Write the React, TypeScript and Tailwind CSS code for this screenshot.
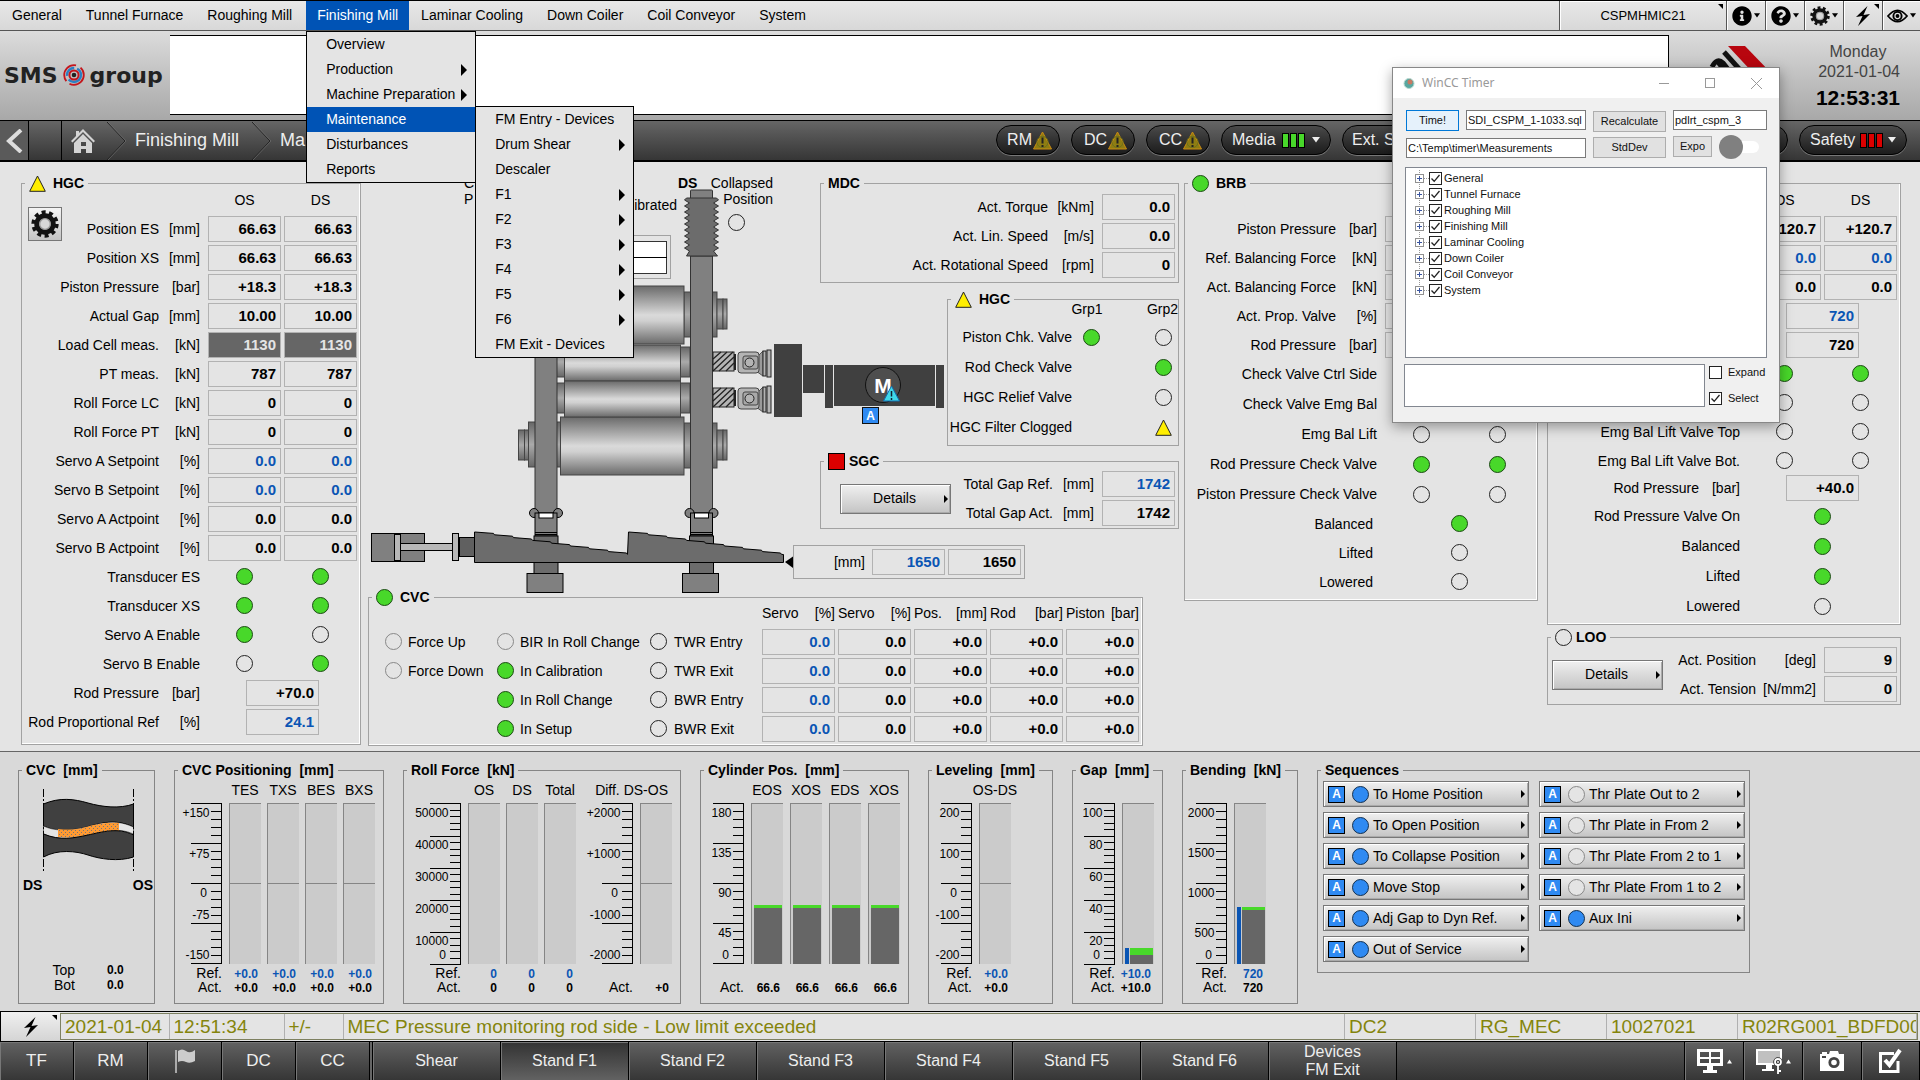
import React, { ReactNode } from "react";
import { FaInfoCircle, FaQuestionCircle } from "react-icons/fa";

/* ---------- small shared parts ---------- */

type LampState = "on" | "off" | "dim" | "blue";

const lampTone: Record<LampState, string> = {
  on: "border-[#1c4a14] bg-[#48d82a]",
  off: "border-[#222] bg-transparent",
  dim: "border-[#888] bg-[#e4e4e4]",
  blue: "border-[#14304e] bg-[#2f8af2]",
};

function Lamp({ s }: { s: LampState }) {
  return <span className={`inline-block h-[17px] w-[17px] shrink-0 rounded-full border align-middle ${lampTone[s]}`} />;
}

function WarnTriangle() {
  return (
    <svg className="inline-block h-[17px] w-[17px] shrink-0 align-middle" viewBox="0 0 17 17">
      <path d="M8.5 1 L16.3 16.3 H0.7 Z" fill="#ffee00" stroke="#222" />
    </svg>
  );
}

function Arrow({ className }: { className?: string }) {
  return (
    <svg className={className} viewBox="0 0 5 10" preserveAspectRatio="none">
      <path d="M0 0 L5 5 L0 10 Z" fill="currentColor" />
    </svg>
  );
}

function Down({ className }: { className?: string }) {
  return (
    <svg className={className} viewBox="0 0 8 6">
      <path d="M0 0 H8 L4 5.5 Z" fill="currentColor" />
    </svg>
  );
}

function ABadge() {
  return (
    <span className="flex h-[17px] w-[17px] shrink-0 items-center justify-center border border-black bg-[#2f8af2] text-[12px] leading-none font-bold text-white">
      A
    </span>
  );
}

function Panel({
  title,
  icon,
  bevel,
  tight,
  low,
  className = "",
  children,
}: {
  title: string;
  icon?: ReactNode;
  bevel?: boolean;
  tight?: boolean;
  low?: boolean;
  className?: string;
  children: ReactNode;
}) {
  return (
    <fieldset
      className={`relative min-w-0 border ${low ? "border-[#858585]" : "border-[#a2a2a2]"} ${bevel ? "shadow-[inset_-1px_-1px_0_#fff]" : ""} ${className}`}
    >
      <legend
        className={`ml-[3px] flex h-5 items-center px-1 text-[14px] leading-5 font-bold whitespace-pre ${low ? "bg-[#d9d9d9]" : "bg-[#e4e4e4]"} ${tight ? "gap-1" : "gap-[7px]"}`}
      >
        {icon}
        {title}
      </legend>
      {children}
    </fieldset>
  );
}

type Cell = { v?: string; tone?: "blue" | "dark"; lamp?: LampState; warn?: boolean };
type Row = { l: string; u?: string; c: Cell[]; h?: "tall" | "short"; inset?: boolean };

const boxTone = {
  plain: "border-[#b2b2b2] font-bold text-black",
  blue: "border-[#b2b2b2] font-bold text-[#0a55b4]",
  dark: "border-[#b2b2b2] bg-[#666] font-bold text-[#e4e4e4]",
};

function Box({ v, tone }: { v: string; tone?: Cell["tone"] }) {
  return (
    <span
      className={`inline-flex h-[26px] w-[73px] items-center justify-end border pr-1 align-middle text-[15px] ${boxTone[tone ?? "plain"]}`}
    >
      {v}
    </span>
  );
}

function CellView({ c }: { c: Cell }) {
  if (c.warn) return <WarnTriangle />;
  if (c.lamp) return <Lamp s={c.lamp} />;
  return <Box v={c.v ?? ""} tone={c.tone} />;
}

const rowHeight = { normal: "h-[29px]", tall: "h-[30px]", short: "h-[26px]" };
const unitWidth = { narrow: "w-[49px]", mid: "w-[54px]", wide: "w-[68px]" };

function MeasureTable({
  rows,
  heads,
  cols = 2,
  unit = "narrow",
  className = "",
}: {
  rows: Row[];
  heads?: string[];
  cols?: 1 | 2;
  unit?: keyof typeof unitWidth;
  className?: string;
}) {
  return (
    <table className={`-mt-px w-full table-fixed border-collapse text-[14px] leading-4 whitespace-nowrap ${className}`}>
      <colgroup>
        <col />
        <col className={unitWidth[unit]} />
        <col className="w-[76px]" />
        {cols === 2 && <col className="w-[76px]" />}
      </colgroup>
      {heads && (
        <thead>
          <tr className="h-[22px]">
            <td colSpan={2} />
            {heads.map((h, i) => (
              <th key={i} scope="col" className="p-0 pr-[3px] align-top font-normal">
                {h}
              </th>
            ))}
          </tr>
        </thead>
      )}
      <tbody>
        {rows.map((r, i) => (
          <tr key={i} className={rowHeight[r.h ?? "normal"]}>
            <th
              scope="row"
              colSpan={r.u ? 1 : 2}
              className={`p-0 text-right font-normal ${r.u ? "" : r.inset ? "pr-3" : "pr-2"}`}
            >
              {r.l}
            </th>
            {r.u && <td className="p-0 pr-2 text-right">{r.u}</td>}
            {r.c.map((c, j) => (
              <td key={j} colSpan={cols / r.c.length} className="p-0 pr-[3px] text-center">
                <CellView c={c} />
              </td>
            ))}
          </tr>
        ))}
      </tbody>
    </table>
  );
}

function BevelButton({ children, className = "" }: { children: ReactNode; className?: string }) {
  return (
    <button
      className={`flex items-center border border-[#777] bg-linear-to-b from-[#f0f0f0] to-[#c4c4c4] text-[14px] whitespace-nowrap shadow-[inset_1px_1px_0_#fff,inset_-1px_-1px_0_#aaa] ${className}`}
    >
      {children}
    </button>
  );
}

function DetailsButton({ className = "" }: { className?: string }) {
  return (
    <BevelButton className={`h-[30px] w-[111px] shrink-0 pr-[2px] pl-1 ${className}`}>
      <span className="flex-1 text-center">Details</span>
      <Arrow className="h-2 w-1" />
    </BevelButton>
  );
}

/* ---------- icons ---------- */

function Gear({ className }: { className?: string }) {
  return (
    <svg className={className} viewBox="0 0 24 24">
      <circle cx="12" cy="12" r="10" fill="none" stroke="#111" strokeWidth="3.4" strokeDasharray="3.4 2.88" />
      <circle cx="12" cy="12" r="7" fill="#d8d8d8" stroke="#111" strokeWidth="4.4" />
      <circle cx="12" cy="12" r="4.6" fill="none" stroke="#999" strokeWidth="1.2" />
    </svg>
  );
}

function Bolt({ className }: { className?: string }) {
  return (
    <svg className={className} viewBox="0 0 16 20">
      <path d="M12.5 0 L1 11 L7.5 10 L3 20 L15 8 L8.5 9 Z" fill="#000" />
    </svg>
  );
}

function Eye({ className }: { className?: string }) {
  return (
    <svg className={className} viewBox="0 0 22 16">
      <path d="M1 8 Q11 -4 21 8 Q11 20 1 8 Z" fill="none" stroke="#000" strokeWidth="1.8" />
      <circle cx="11" cy="8" r="4.3" fill="none" stroke="#000" strokeWidth="2" />
      <circle cx="11" cy="8" r="2" />
    </svg>
  );
}

function CornerMark() {
  return (
    <svg className="absolute top-[3px] right-[3px] h-[5px] w-[5px]" viewBox="0 0 5 5">
      <path d="M0 0 H5 V5 Z" />
    </svg>
  );
}

/* ---------- top menu ---------- */

const menus = [
  "General",
  "Tunnel Furnace",
  "Roughing Mill",
  "Finishing Mill",
  "Laminar Cooling",
  "Down Coiler",
  "Coil Conveyor",
  "System",
];

const millMenu: [string, boolean][] = [
  ["Overview", false],
  ["Production", true],
  ["Machine Preparation", true],
  ["Maintenance", false],
  ["Disturbances", false],
  ["Reports", false],
];

const maintMenu: [string, boolean][] = [
  ["FM Entry - Devices", false],
  ["Drum Shear", true],
  ["Descaler", false],
  ["F1", true],
  ["F2", true],
  ["F3", true],
  ["F4", true],
  ["F5", true],
  ["F6", true],
  ["FM Exit - Devices", false],
];

function MenuList({ items, active, className }: { items: [string, boolean][]; active?: string; className: string }) {
  return (
    <div role="menu" className={`absolute z-20 border border-black bg-[#e4e4e4] text-[14px] text-black ${className}`}>
      {items.map(([t, sub]) => (
        <button
          key={t}
          role="menuitem"
          className={`flex h-[25px] w-full items-center justify-between pr-2 pl-[19px] text-left whitespace-nowrap ${t === active ? "bg-[#0053b5] text-white" : ""}`}
        >
          {t}
          {sub && <Arrow className="h-3 w-[6px] shrink-0" />}
        </button>
      ))}
    </div>
  );
}

function TopMenu() {
  const cell =
    "relative flex h-full items-center justify-center gap-[2px] border-l border-[#555] shadow-[inset_1px_1px_0_#fff]";
  return (
    <nav className="flex h-[31px] border-t border-b border-t-black border-b-[#555] bg-linear-to-b from-[#e8e8e8] to-[#d8d8d8] text-[14px]">
      {menus.map((m) =>
        m === "Finishing Mill" ? (
          <div key={m} className="relative ml-[2px]">
            <button className="h-[29px] bg-[#0053b5] px-[11px] text-white">{m}</button>
            <MenuList items={millMenu} active="Maintenance" className="top-[30px] left-0 w-[170px]" />
            <MenuList items={maintMenu} className="top-[105px] left-[169px] w-[159px]" />
          </div>
        ) : (
          <button key={m} className="px-3">
            {m}
          </button>
        ),
      )}
      <div className="ml-auto flex">
        <button className={`${cell} w-[167px] text-[13px]`}>
          CSPMHMIC21
          <CornerMark />
        </button>
        <button aria-label="Information" className={`${cell} w-[39px]`}>
          <FaInfoCircle size={20} />
          <Down className="h-[5px] w-[6px]" />
        </button>
        <button aria-label="Help" className={`${cell} w-[39px]`}>
          <FaQuestionCircle size={20} />
          <Down className="h-[5px] w-[6px]" />
        </button>
        <button aria-label="Settings" className={`${cell} w-[39px]`}>
          <Gear className="h-5 w-5" />
          <Down className="h-[5px] w-[6px]" />
        </button>
        <button aria-label="Alarms" className={`${cell} w-[39px]`}>
          <Bolt className="h-5 w-4" />
          <CornerMark />
        </button>
        <button aria-label="View" className={`${cell} w-[38px]`}>
          <Eye className="h-4 w-[21px]" />
          <Down className="h-[5px] w-[6px]" />
        </button>
      </div>
    </nav>
  );
}

function Header() {
  return (
    <header className="flex h-[89px] bg-linear-to-b from-[#dcdcdc] to-[#a8a8a8] pt-1 pb-[5px]">
      <div className="flex w-[170px] shrink-0 items-center pl-1 font-['DejaVu_Sans'] text-[22px] font-bold text-[#222]">
        <span>SMS</span>
        <svg className="mx-[5px] h-6 w-[22px] shrink-0" viewBox="0 0 22 22" fill="none">
          <circle cx="11" cy="11" r="9.8" stroke="#c4161c" strokeWidth="1.8" strokeDasharray="20 4 24 5" />
          <circle cx="11" cy="11" r="7" stroke="#2b7fc3" strokeWidth="2.4" strokeDasharray="17 4 12 3" />
          <circle cx="11" cy="11" r="4.6" stroke="#c4161c" strokeWidth="2" />
          <circle cx="11" cy="11" r="2.3" fill="#222" />
        </svg>
        <span>group</span>
      </div>
      <div className="flex-1 border border-l-0 border-black bg-white" />
      <div className="flex w-[251px] shrink-0 justify-between pr-5">
        <svg className="mt-2 ml-10 h-12 w-16" viewBox="0 0 64 48">
          <path d="M19 3 H36 L64 32 H46 Z" fill="#b8060f" />
          <g stroke="#111" strokeWidth="5" fill="none">
            <path d="M15 9 L32 28" />
            <path d="M3 24 Q8 14 14 20 L25 34 M9 19 L22 36" />
          </g>
        </svg>
        <div className="flex flex-col items-end pt-[7px] text-[16px] leading-5 text-[#444]">
          <span className="self-center">Monday</span>
          <span>2021-01-04</span>
          <time className="mt-1 text-[21px] leading-6 font-bold text-black">12:53:31</time>
        </div>
      </div>
    </header>
  );
}

function Pill({ children, className = "" }: { children?: ReactNode; className?: string }) {
  return (
    <button
      className={`flex h-[30px] shrink-0 items-center rounded-full border border-black bg-linear-to-b from-[#4a4a4a] to-[#1c1c1c] text-[16px] whitespace-nowrap text-[#eee] shadow-[0_1px_0_#777] ${className}`}
    >
      {children}
    </button>
  );
}

function PillWarn() {
  return (
    <svg className="h-[19px] w-[19px]" viewBox="0 0 19 19">
      <path d="M9.5 1 L18.5 18 H0.5 Z" fill="#8e7d12" stroke="#c98a12" />
      <circle cx="9.5" cy="11" r="5.6" fill="none" stroke="#6c6f1c" />
      <path d="M9.5 6.5 V12.5 M9.5 14 V16" stroke="#222" strokeWidth="2" />
    </svg>
  );
}

function Bars({ red }: { red?: boolean }) {
  const tone = red ? "bg-[#dc0000]" : "bg-[#48d82a]";
  return (
    <span className="flex gap-px">
      {[0, 1, 2].map((i) => (
        <span key={i} className={`h-[15px] w-[7px] border border-black ${tone}`} />
      ))}
    </span>
  );
}

function Chevron() {
  return (
    <svg className="h-[38px] w-[19px]" viewBox="0 0 19 38" fill="none">
      <path d="M0 0 L18 19 L0 38" stroke="#222" />
      <path d="M1 0 L19 19 L1 38" stroke="#777" strokeWidth="0.6" />
    </svg>
  );
}

function CrumbBar() {
  return (
    <div className="flex h-[42px] items-center justify-between border-t border-b-2 border-black bg-linear-to-b from-[#666] to-[#363636]">
      <div className="flex h-full items-center text-[18px] text-[#eee]">
        <button aria-label="Back" className="flex h-full w-[29px] items-center justify-center border-r border-black bg-[#5a5a5a]">
          <svg className="h-6 w-5" viewBox="0 0 20 24" fill="none">
            <path d="M17 1 L5 12 L17 23" stroke="#ddd" strokeWidth="4" />
          </svg>
        </button>
        <div className="h-full w-[33px] border-r border-black" />
        <button aria-label="Home" className="flex w-[45px] items-center pl-[9px]">
          <svg className="h-6 w-6" viewBox="0 0 24 24" fill="#d4d4d4">
            <path d="M12 0 L24 12 L22.5 13.5 L12 3 L1.5 13.5 L0 12 L5 7 V2 H8 V4 Z" />
            <path d="M12 5 L21 14 V24 H15 V20 H10 V24 H3 V14 Z M10 13 V17 H15 V13 Z" fillRule="evenodd" />
          </svg>
        </button>
        <Chevron />
        <button className="px-[9px]">Finishing Mill</button>
        <span className="ml-1">
          <Chevron />
        </span>
        <button className="px-[9px]">Ma</button>
      </div>
      <div className="flex items-center gap-[11px] pr-[13px] pb-px">
        {["RM", "DC", "CC"].map((t) => (
          <Pill key={t} className="w-[64px] justify-end gap-px pr-[7px]">
            {t}
            <PillWarn />
          </Pill>
        ))}
        <Pill className="w-[110px] justify-between px-[10px]">
          Media <Bars /> <Down className="h-[6px] w-2" />
        </Pill>
        <Pill className="w-[110px] px-[9px]">Ext. S</Pill>
        <span className="w-[204px]" />
        <Pill className="w-[110px]" />
        <Pill className="w-[108px] justify-between px-[10px]">
          Safety <Bars red /> <Down className="h-[6px] w-2" />
        </Pill>
      </div>
    </div>
  );
}

/* ---------- main process area ---------- */

const two = (v: string, tone?: Cell["tone"]): Cell[] => [
  { v, tone },
  { v, tone },
];
const lamps = (...s: LampState[]): Cell[] => s.map((lamp) => ({ lamp }));

const hgcRows: Row[] = [
  { l: "Position ES", u: "[mm]", c: two("66.63") },
  { l: "Position XS", u: "[mm]", c: two("66.63") },
  { l: "Piston Pressure", u: "[bar]", c: two("+18.3") },
  { l: "Actual Gap", u: "[mm]", c: two("10.00") },
  { l: "Load Cell meas.", u: "[kN]", c: two("1130", "dark") },
  { l: "PT meas.", u: "[kN]", c: two("787") },
  { l: "Roll Force LC", u: "[kN]", c: two("0") },
  { l: "Roll Force PT", u: "[kN]", c: two("0") },
  { l: "Servo A Setpoint", u: "[%]", c: two("0.0", "blue") },
  { l: "Servo B Setpoint", u: "[%]", c: two("0.0", "blue") },
  { l: "Servo A Actpoint", u: "[%]", c: two("0.0") },
  { l: "Servo B Actpoint", u: "[%]", c: two("0.0") },
  { l: "Transducer ES", c: lamps("on", "on") },
  { l: "Transducer XS", c: lamps("on", "on") },
  { l: "Servo A Enable", c: lamps("on", "off") },
  { l: "Servo B Enable", c: lamps("off", "on") },
  { l: "Rod Pressure", u: "[bar]", c: [{ v: "+70.0" }] },
  { l: "Rod Proportional Ref", u: "[%]", c: [{ v: "24.1", tone: "blue" }] },
];

const brbRows: Row[] = [
  { l: "Piston Pressure", u: "[bar]", c: two("") },
  { l: "Ref. Balancing Force", u: "[kN]", c: two("") },
  { l: "Act. Balancing Force", u: "[kN]", c: two("") },
  { l: "Act. Prop. Valve", u: "[%]", c: two("") },
  { l: "Rod Pressure", u: "[bar]", c: two("") },
  { l: "Check Valve Ctrl Side", c: lamps("off", "off"), h: "tall" },
  { l: "Check Valve Emg Bal", c: lamps("off", "off"), h: "tall" },
  { l: "Emg Bal Lift", c: lamps("off", "off"), h: "tall" },
  { l: "Rod Pressure Check Valve", c: lamps("on", "on"), h: "tall" },
  { l: "Piston Pressure Check Valve", c: lamps("off", "off"), h: "tall" },
  { l: "Balanced", c: lamps("on"), inset: true },
  { l: "Lifted", c: lamps("off"), inset: true },
  { l: "Lowered", c: lamps("off"), inset: true },
];

const liftRows: Row[] = [
  { l: "", c: two("+120.7") },
  { l: "", c: two("0.0", "blue") },
  { l: "", c: two("0.0") },
  { l: "", c: [{ v: "720", tone: "blue" }] },
  { l: "", c: [{ v: "720" }] },
  { l: "", c: lamps("on", "on") },
  { l: "", c: lamps("off", "off") },
  { l: "Emg Bal Lift Valve Top", c: lamps("off", "off") },
  { l: "Emg Bal Lift Valve Bot.", c: lamps("off", "off") },
  { l: "Rod Pressure", u: "[bar]", c: [{ v: "+40.0" }], h: "short" },
  { l: "Rod Pressure Valve On", c: lamps("on"), h: "tall" },
  { l: "Balanced", c: lamps("on"), h: "tall" },
  { l: "Lifted", c: lamps("on"), h: "tall" },
  { l: "Lowered", c: lamps("off"), h: "tall" },
];

const wedge = (x0: number) => {
  let d = `L${x0} 532`;
  for (let i = 1; i <= 8; i++) {
    const x = x0 + i * 19;
    const y = 532 + i * 2.8;
    d += ` L${x} ${y - 1.4} L${x + 1} ${y}`;
  }
  return d;
};

function Post({ x }: { x: number }) {
  const teeth = Array.from({ length: 9 }, (_, i) => 200 + i * 6);
  const left = teeth.map((y) => `L${x - 6} ${y} L${x - 1} ${y + 3}`).join(" ");
  const right = [...teeth].reverse().map((y) => `L${x + 23} ${y + 3} L${x + 28} ${y}`).join(" ");
  return (
    <g stroke="#333">
      <rect x={x} y="190" width="22" height="9" rx="1" fill="#808080" />
      <rect x={x} y="256" width="22" height="257" fill="#808080" />
      <path d={`M${x - 4} 198 ${left} L${x - 4} 256 H${x + 27} ${right} L${x + 26} 198 Z`} fill="#6c6c6c" />
      <g stroke="#000">
        <circle cx={x - 1} cy="513" r="4.5" fill="#808080" />
        <circle cx={x + 23} cy="513" r="4.5" fill="#808080" />
        <rect x={x} y="513" width="22" height="23" fill="#808080" />
        <rect x={x + 4} y="513" width="14" height="5" fill="#fff" />
        <path d={`M${x} 532.5 h22 M${x} 534.5 h22`} />
        <rect x={x - 1} y="536" width="24" height="38" fill="#6c6c6c" />
        <rect x={x - 8} y="573.500" width="36" height="19" fill="#808080" />
      </g>
    </g>
  );
}

function Spindle({ y }: { y: number }) {
  return (
    <g stroke="#222">
      <rect x="713" y={y + 1} width="21" height="19" fill="#b4b4b4" />
      <path
        d={`M713 ${y + 8} l8 -7 M713 ${y + 14} l14 -13 M713 ${y + 20} l20 -19 M719 ${y + 20} l15 -14 M726 ${y + 20} l8 -8`}
        strokeWidth="1.3"
      />
      <path d={`M735 ${y + 3} v16`} strokeWidth="2" />
      <path d={`M759 ${y + 4} L763 ${y} V${y + 25} L756 ${y + 20} H740 Z`} fill="#9a9a9a" stroke="#555" />
      <rect x="738" y={y + 1} width="21" height="21" rx="3" fill="#b4b4b4" stroke="#444" />
      <rect x="743" y={y + 5} width="15" height="13" rx="2" fill="#a8a8a8" stroke="#444" />
      <circle cx="749.5" cy={y + 11.5} r="4.5" fill="#b4b4b4" />
      <rect x="763" y={y} width="3" height="25" fill="#b4b4b4" />
      <rect x="767" y={y - 1} width="4" height="27" fill="#b4b4b4" />
    </g>
  );
}

function Mimic() {
  return (
    <svg
      className="absolute top-0 left-0 h-[421px] w-[577px] font-['Liberation_Sans'] text-[14px]"
      viewBox="369 173 577 421"
      fill="none"
    >
      <defs>
        <linearGradient id="roll" x1="0" x2="0" y1="0" y2="1">
          <stop offset="0" stopColor="#6a6a6a" />
          <stop offset="0.5" stopColor="#dadada" />
          <stop offset="0.6" stopColor="#d0d0d0" />
          <stop offset="1" stopColor="#6a6a6a" />
        </linearGradient>
        <linearGradient id="neck" x1="0" x2="0" y1="0" y2="1">
          <stop offset="0" stopColor="#666" />
          <stop offset="0.5" stopColor="#aaa" />
          <stop offset="1" stopColor="#666" />
        </linearGradient>
      </defs>
      <g fill="#000">
        <text x="464" y="188">C</text>
        <text x="464" y="204">P</text>
        <text x="677" y="210" textAnchor="end">ibrated</text>
        <text x="678" y="188" fontWeight="bold">DS</text>
        <text x="773" y="188" textAnchor="end">Collapsed</text>
        <text x="773" y="204" textAnchor="end">Position</text>
      </g>
      <circle cx="736.5" cy="222.5" r="8" stroke="#222" />
      <rect x="560.5" y="235.500" width="110" height="43" stroke="#a2a2a2" />
      <rect x="566.5" y="241.500" width="100" height="32" fill="#fff" stroke="#333" />
      <path d="M566 257.500 H667" stroke="#000" />

      <g stroke="#444">
        {[286, 417].map((y) => (
          <g key={y}>
            <rect x="518.500" y={y + 13} width="6" height="30" fill="url(#neck)" />
            <rect x="524.500" y={y + 13} width="4" height="30" fill="url(#neck)" />
            <rect x="528.500" y={y + 5} width="32" height="45" fill="url(#neck)" />
            <rect x="684" y={y + 6} width="33" height="45" fill="url(#neck)" />
            <rect x="717" y={y + 13} width="6" height="30" fill="url(#neck)" />
            <rect x="723" y={y + 13} width="4" height="30" fill="url(#neck)" />
            <rect x="560.500" y={y} width="123.500" height="58" fill="url(#roll)" />
          </g>
        ))}
        {[345, 381].map((y) => (
          <g key={y}>
            <rect x="556" y={y + 2} width="134" height="30" fill="url(#neck)" />
            <rect x="564.500" y={y} width="116" height="36" fill="url(#roll)" />
          </g>
        ))}
      </g>

      <Post x={535} />
      <Post x={690.5} />
      <Spindle y={351} />
      <Spindle y={387} />

      <g fill="#404040">
        <rect x="774" y="344" width="28" height="73" />
        <rect x="803" y="365" width="21" height="28" />
        <rect x="825" y="365" width="8" height="43" />
        <rect x="834" y="365" width="101" height="41" />
        <rect x="936" y="365" width="8" height="43" />
      </g>
      <circle cx="883" cy="385" r="17.500" fill="#4e4e4e" stroke="#111" />
      <text x="883" y="393" textAnchor="middle" fill="#fff" fontSize="21" fontWeight="bold">
        M
      </text>
      <path d="M891.500 386 L899.500 401 H883.500 Z" fill="#3fd8e8" stroke="#126cae" />
      <path d="M891.500 391 V396.500 M891.500 398 V400" stroke="#123" strokeWidth="1.500" />
      <rect x="862.500" y="407.500" width="16" height="16" fill="#2f8af2" stroke="#111" />
      <text x="870.500" y="420" textAnchor="middle" fill="#fff" fontSize="12" fontWeight="bold">
        A
      </text>

      <g stroke="#000">
        <rect x="371.500" y="533.500" width="53" height="28" fill="#808080" />
        <rect x="400.500" y="543.500" width="52" height="7" fill="#b8b8b8" />
        <rect x="394.500" y="534.500" width="6" height="26" fill="#b8b8b8" />
        <rect x="459.500" y="537.500" width="15" height="19" fill="#606060" />
        <rect x="452.500" y="533.500" width="6" height="27" fill="#b8b8b8" />
        <path d={`M474.500 562.500 ${wedge(474.5)} ${wedge(628.5)} L783.500 554.500 V562.500 Z`} fill="#6c6c6c" />
      </g>
      <path d="M785 562 L793 556.500 V568 Z" fill="#000" />
    </svg>
  );
}

const cvcTableRows = ["TWR Entry", "TWR Exit", "BWR Entry", "BWR Exit"];
const cvcHeads: [string, string][] = [
  ["Servo", "[%]"],
  ["Servo", "[%]"],
  ["Pos.", "[mm]"],
  ["Rod", "[bar]"],
  ["Piston", "[bar]"],
];

function LampList({ items, className = "" }: { items: [string, LampState][]; className?: string }) {
  return (
    <ul className={`flex flex-col pt-[22px] ${className}`}>
      {items.map(([t, s]) => (
        <li key={t} className="flex h-[29px] items-center gap-[6px] whitespace-nowrap">
          <Lamp s={s} />
          {t}
        </li>
      ))}
    </ul>
  );
}

function CvcPanel() {
  return (
    <Panel title="CVC" icon={<Lamp s="on" />} bevel className="mt-2 -ml-px w-[775px] pb-[2px]">
      <div className="-mt-[2px] flex text-[14px] leading-4">
        <LampList
          className="w-[112px] pl-4"
          items={[
            ["Force Up", "dim"],
            ["Force Down", "dim"],
          ]}
        />
        <LampList
          className="w-[154px] pl-4"
          items={[
            ["BIR In Roll Change", "dim"],
            ["In Calibration", "on"],
            ["In Roll Change", "on"],
            ["In Setup", "on"],
          ]}
        />
        <table className="ml-auto table-fixed border-collapse whitespace-nowrap">
          <thead>
            <tr className="h-[22px]">
              <td className="w-[112px]" />
              {cvcHeads.map(([a, b], i) => (
                <th key={i} scope="col" className="w-[76px] p-0 pr-[3px] align-top font-normal">
                  <span className="flex justify-between">
                    <span>{a}</span>
                    <span>{b}</span>
                  </span>
                </th>
              ))}
            </tr>
          </thead>
          <tbody>
            {cvcTableRows.map((r) => (
              <tr key={r} className="h-[29px]">
                <th scope="row" className="p-0 text-left font-normal">
                  <span className="flex items-center gap-[7px]">
                    <Lamp s="off" />
                    {r}
                  </span>
                </th>
                <td className="p-0"><Box v="0.0" tone="blue" /></td>
                <td className="p-0"><Box v="0.0" /></td>
                <td className="p-0"><Box v="+0.0" /></td>
                <td className="p-0"><Box v="+0.0" /></td>
                <td className="p-0"><Box v="+0.0" /></td>
              </tr>
            ))}
          </tbody>
        </table>
      </div>
    </Panel>
  );
}

function ProcessArea() {
  return (
    <main className="flex items-start pt-[11px] pr-[19px] pb-[5px] pl-[21px]">
      <Panel title="HGC" icon={<WarnTriangle />} bevel className="w-[340px] shrink-0 pb-2">
        <MeasureTable rows={hgcRows} heads={["OS", "DS"]} />
        <button
          aria-label="HGC settings"
          className="absolute top-[14px] left-[6px] flex h-[34px] w-[34px] items-center justify-center border border-[#777] bg-linear-to-b from-[#f4f4f4] to-[#c4c4c4]"
        >
          <Gear className="h-7 w-7" />
        </button>
      </Panel>

      <div className="ml-2 flex-1">
        <div className="relative flex">
          <Mimic />
          <div className="ml-[424px] flex w-[386px] flex-col">
            <Panel title="MDC" className="ml-[27px] pb-[3px]">
              <MeasureTable
                cols={1}
                unit="mid"
                rows={[
                  { l: "Act. Torque", u: "[kNm]", c: [{ v: "0.0" }] },
                  { l: "Act. Lin. Speed", u: "[m/s]", c: [{ v: "0.0" }] },
                  { l: "Act. Rotational Speed", u: "[rpm]", c: [{ v: "0" }] },
                ]}
              />
            </Panel>
            <Panel title="HGC" icon={<WarnTriangle />} className="mt-[6px] w-[232px] self-end pb-[3px]">
              <table className="-mt-2 w-full table-fixed text-[14px] leading-4 whitespace-nowrap">
                <colgroup>
                  <col className="w-[124px]" />
                  <col className="w-[38px]" />
                  <col />
                </colgroup>
                <thead>
                  <tr className="h-[21px]">
                    <td />
                    <th scope="col" className="p-0 align-top font-normal">
                      <span className="-ml-2">Grp1</span>
                    </th>
                    <th scope="col" className="p-0 text-right align-top font-normal">Grp2</th>
                  </tr>
                </thead>
                <tbody>
                  {[
                    ["Piston Chk. Valve", { lamp: "on" }, { lamp: "off" }],
                    ["Rod Check Valve", null, { lamp: "on" }],
                    ["HGC Relief Valve", null, { lamp: "off" }],
                    ["HGC Filter Clogged", null, { warn: true }],
                  ].map((r, i) => (
                    <tr key={i} className="h-[30px]">
                      <th scope="row" className="p-0 text-right font-normal">{r[0] as string}</th>
                      <td className="p-0 text-center">{r[1] && <CellView c={r[1] as Cell} />}</td>
                      <td className="p-0 pr-[6px] text-right"><CellView c={r[2] as Cell} /></td>
                    </tr>
                  ))}
                </tbody>
              </table>
            </Panel>
            <Panel
              title="SGC"
              tight
              icon={<span className="h-[17px] w-[17px] border border-black bg-[#dc0000]" />}
              className="mt-[5px] ml-[27px] pb-px"
            >
              <div className="-mt-px flex items-center">
                <DetailsButton className="ml-[19px]" />
                <MeasureTable
                  cols={1}
                  rows={[
                    { l: "Total Gap Ref.", u: "[mm]", c: [{ v: "1742", tone: "blue" }] },
                    { l: "Total Gap Act.", u: "[mm]", c: [{ v: "1742" }] },
                  ]}
                />
              </div>
            </Panel>
            <div className="mt-4 flex h-[34px] w-[232px] items-center justify-end gap-[3px] border border-[#a2a2a2] pr-[3px] text-[14px]">
              <span className="mr-1">[mm]</span>
              <Box v="1650" tone="blue" />
              <Box v="1650" />
            </div>
          </div>
        </div>
        <CvcPanel />
      </div>

      <Panel title="BRB" icon={<Lamp s="on" />} bevel className="ml-[5px] w-[354px] shrink-0 pb-1">
        <MeasureTable rows={brbRows} heads={["", ""]} />
      </Panel>

      <div className="ml-[9px] w-[354px] shrink-0">
        <div className="mt-[10px] border border-[#a2a2a2] pt-[9px] pb-[3px] shadow-[inset_-1px_-1px_0_#fff]">
          <MeasureTable rows={liftRows} heads={["OS", "DS"]} />
        </div>
        <Panel title="LOO" icon={<Lamp s="off" />} tight className="mt-[2px] pb-px">
          <div className="-mt-px flex items-center">
            <DetailsButton className="ml-1" />
            <MeasureTable
              cols={1}
              unit="wide"
              rows={[
                { l: "Act. Position", u: "[deg]", c: [{ v: "9" }] },
                { l: "Act. Tension", u: "[N/mm2]", c: [{ v: "0" }] },
              ]}
            />
          </div>
        </Panel>
      </div>
    </main>
  );
}

/* ---------- bar graphs ---------- */

type ScaleDef = { labels: [string, number][]; fine?: boolean; narrow?: boolean };

function Scale({ labels, fine, narrow }: ScaleDef) {
  const majors = fine ? [0, 33, 65, 97, 129, 161] : [0, 40, 80, 120, 160];
  const n = 5;
  const minors: number[] = [];
  for (let m = 0; m < majors.length - 1; m++) {
    for (let i = 1; i < n; i++) minors.push(Math.round(majors[m] + ((majors[m + 1] - majors[m]) * i) / n));
  }
  return (
    <svg
      className={`h-[162px] font-['Liberation_Sans'] ${narrow ? "w-10" : "w-12"}`}
      viewBox={narrow ? "8 0 40 162" : "0 0 48 162"}
    >
      <path
        d={`M47.5 0 V${majors[majors.length - 1] + 1} ${majors.map((y) => `M17 ${y + 0.5} H48`).join(" ")} ${minors.map((y) => `M37 ${y + 0.5} H48`).join(" ")}`}
        stroke="#000"
        fill="none"
      />
      {labels.map(([t, y]) => (
        <text key={t} x={t.length < 2 ? 33 : 35.5} y={y + 4} textAnchor="end" fontSize="12">
          {t}
        </text>
      ))}
    </svg>
  );
}

function ScaleColumn({ scale, refRow = true, className = "" }: { scale: ScaleDef; refRow?: boolean; className?: string }) {
  return (
    <div className={`flex shrink-0 flex-col items-end pt-[23px] text-[14px] ${className}`}>
      <Scale {...scale} />
      <span className="mt-px h-[14px] leading-[14px]">{refRow ? "Ref." : ""}</span>
      <span className="h-[14px] leading-[14px]">Act.</span>
    </div>
  );
}

function Bar({
  head = "",
  mid,
  level,
  cap = 3,
  target,
  refV = "",
  act,
}: {
  head?: string;
  mid?: boolean;
  level?: number;
  cap?: number;
  target?: boolean;
  refV?: string;
  act: string;
}) {
  return (
    <div className="flex w-8 shrink-0 flex-col">
      <span className="flex h-[23px] justify-center pt-[2px] text-[14px] leading-4 whitespace-nowrap">{head}</span>
      <span className="flex h-[161px] items-end gap-px border-t border-l border-[#858585] bg-[#cbcbcb] pr-px pl-[2px]">
        {mid && <span className="-mr-px -ml-[2px] h-[81px] flex-1 border-t border-[#858585]" />}
        {level !== undefined && target && <span className="w-1 bg-[#0a55b4]" style={{ height: level }} />}
        {level !== undefined && (
          <span className="flex flex-1 flex-col bg-[#666]" style={{ height: level }}>
            <span className="bg-[#48d82a]" style={{ height: cap }} />
          </span>
        )}
      </span>
      <span className="mt-[3px] flex h-[14px] justify-end pr-[3px] text-[12px] leading-[14px] font-bold text-[#0a55b4]">{refV}</span>
      <span className="flex h-[14px] justify-end pr-[3px] text-[12px] leading-[14px] font-bold">{act}</span>
    </div>
  );
}

const sym = (a: string[]): [string, number][] => a.map((t, i) => [t, [10, 51, 90, 112, 152][i]]);
const pos = (a: string[]): [string, number][] => a.map((t, i) => [t, [10, 50, 90, 130, 152][i]]);
const six = (a: string[]): [string, number][] => a.map((t, i) => [t, [10, 42, 74, 106, 138, 152][i]]);

function GapProfile() {
  return (
    <svg className="h-[82px] w-[93px]" viewBox="0 0 93 82">
      <defs>
        <pattern id="dots" width="4" height="4" patternUnits="userSpaceOnUse">
          <rect width="4" height="4" fill="#ff9a33" />
          <rect width="1" height="1" x="1" y="1" fill="#777" />
          <rect width="1" height="1" x="3" y="3" fill="#777" />
        </pattern>
      </defs>
      <path d="M1.500 15 C18 8 32 10 46 14 S78 20 91.500 15 V38 C70 28 55 36 40 40 S12 42 1.500 37 Z" fill="#404040" stroke="#000" />
      <path d="M1.500 37 C12 42 26 42 40 39 S70 28 91.500 38 V45 C76 38 60 42 46 46 S18 52 1.500 45 Z" fill="#e4e4e4" stroke="#000" strokeWidth="0.500" />
      <path d="M16 40 C26 41 34 41 44 38 S66 33 77 34 V42 C66 41 56 44 46 46 S28 49 16 48 Z" fill="url(#dots)" />
      <path d="M1.500 45 C18 52 32 49 46 46 S76 38 91.500 46 V68 C76 73 58 70 46 66 S16 60 1.500 68 Z" fill="#404040" stroke="#000" />
      <path d="M1.500 0 V82 M91.500 0 V82" stroke="#000" strokeDasharray="8 2 2 2" />
    </svg>
  );
}

function SeqButton({ text, idle }: { text: string; idle?: boolean }) {
  return (
    <BevelButton className="h-[26px] w-[206px] pr-[3px] pl-1">
      <ABadge />
      <span className="ml-[7px] flex items-center">
        <Lamp s={idle ? "dim" : "blue"} />
      </span>
      <span className="ml-1 flex-1 text-left">{text}</span>
      <Arrow className="h-2 w-1" />
    </BevelButton>
  );
}

function TrendArea() {
  return (
    <section className="flex flex-1 items-start gap-[19px] border-t border-[#666] bg-[#d9d9d9] pt-2 pb-[7px] pl-[18px]">
      <Panel low title="CVC  [mm]" className="flex h-[244px] w-[137px] shrink-0 flex-col">
        <div className="flex flex-col pt-[9px] pr-px pl-1 text-[14px]">
          <span className="flex justify-center">
            <GapProfile />
          </span>
          <span className="mt-[6px] flex justify-between leading-4 font-bold">
            <span>DS</span>
            <span>OS</span>
          </span>
          <span className="mt-[70px] flex pl-[28px] leading-[15px]">
            <span className="w-6 text-right">Top</span>
            <b className="ml-8 text-[12px]">0.0</b>
          </span>
          <span className="flex pl-[28px] leading-[15px]">
            <span className="w-6 text-right">Bot</span>
            <b className="ml-8 text-[12px]">0.0</b>
          </span>
        </div>
      </Panel>

      <Panel low title="CVC Positioning  [mm]" className="h-[244px] w-[210px] shrink-0">
        <div className="flex justify-end gap-[6px] pr-2">
          <ScaleColumn className="mr-px" scale={{ labels: sym(["+150", "+75", "0", "-75", "-150"]) }} />
          {["TES", "TXS", "BES", "BXS"].map((h) => (
            <Bar key={h} head={h} mid refV="+0.0" act="+0.0" />
          ))}
        </div>
      </Panel>

      <Panel low title="Roll Force  [kN]" className="h-[244px] w-[278px] shrink-0">
        <div className="flex justify-end gap-[6px] pr-2">
          <ScaleColumn className="mr-px" scale={{ fine: true, labels: six(["50000", "40000", "30000", "20000", "10000", "0"]) }} />
          {["OS", "DS", "Total"].map((h) => (
            <Bar key={h} head={h} refV="0" act="0" />
          ))}
          <div className="flex pl-[3px]">
            <ScaleColumn refRow={false} scale={{ labels: sym(["+2000", "+1000", "0", "-1000", "-2000"]) }} />
          </div>
          <div className="relative pl-px">
            <span className="absolute top-[2px] right-1 text-[14px] leading-4 whitespace-nowrap">Diff. DS-OS</span>
            <Bar mid act="+0" />
          </div>
        </div>
      </Panel>

      <Panel low title="Cylinder Pos.  [mm]" className="h-[244px] w-[209px] shrink-0">
        <div className="flex justify-end gap-[7px] pr-2">
          <ScaleColumn refRow={false} scale={{ narrow: true, labels: pos(["180", "135", "90", "45", "0"]) }} />
          {["EOS", "XOS", "EDS", "XOS"].map((h, i) => (
            <Bar key={i} head={h} level={59} act="66.6" />
          ))}
        </div>
      </Panel>

      <Panel low title="Leveling  [mm]" className="h-[244px] w-[125px] shrink-0">
        <div className="flex justify-end gap-[7px] pr-[41px]">
          <ScaleColumn scale={{ narrow: true, labels: sym(["200", "100", "0", "-100", "-200"]) }} />
          <Bar head="OS-DS" mid refV="+0.0" act="+0.0" />
        </div>
      </Panel>

      <Panel low title="Gap  [mm]" className="h-[244px] w-[91px] shrink-0">
        <div className="flex justify-end gap-[7px] pr-2">
          <ScaleColumn scale={{ narrow: true, fine: true, labels: six(["100", "80", "60", "40", "20", "0"]) }} />
          <Bar level={16} cap={7} target refV="+10.0" act="+10.0" />
        </div>
      </Panel>

      <Panel low title="Bending  [kN]" className="h-[244px] w-[116px] shrink-0">
        <div className="flex justify-end gap-[7px] pr-[31px]">
          <ScaleColumn scale={{ narrow: true, labels: pos(["2000", "1500", "1000", "500", "0"]) }} />
          <Bar level={57} target refV="720" act="720" />
        </div>
      </Panel>

      <Panel low title="Sequences" className="h-[213px] w-[433px] shrink-0">
        <div className="flex gap-[10px] pt-px pl-[5px]">
          <div className="flex flex-col gap-[5px]">
            {["To Home Position", "To Open Position", "To Collapse Position", "Move Stop", "Adj Gap to Dyn Ref.", "Out of Service"].map((t) => (
              <SeqButton key={t} text={t} />
            ))}
          </div>
          <div className="flex flex-col gap-[5px]">
            {["Thr Plate Out to 2", "Thr Plate in From 2", "Thr Plate From 2 to 1", "Thr Plate From 1 to 2"].map((t) => (
              <SeqButton key={t} text={t} idle />
            ))}
            <SeqButton text="Aux Ini" />
          </div>
        </div>
      </Panel>
    </section>
  );
}

/* ---------- alarm line and footer ---------- */

function AlarmLine() {
  const td = "overflow-hidden border-r border-[#b0b0b0] p-0 pl-1";
  return (
    <div className="flex h-[30px] border-t border-black bg-[#e4e4e4]">
      <button aria-label="Alarm list" className="relative flex w-[60px] shrink-0 items-center justify-center border-l border-black bg-linear-to-b from-[#f0f0f0] to-[#d4d4d4]">
        <Bolt className="h-5 w-4" />
        <CornerMark />
      </button>
      <div className="mt-px mr-[2px] mb-px h-[27px] min-w-0 flex-1 overflow-hidden border border-[#7d8060]">
        <table className="w-full table-fixed border-collapse text-[19px] leading-[22px] whitespace-nowrap text-[#84840c]">
          <colgroup>
            <col className="w-[108px]" />
            <col className="w-[115px]" />
            <col className="w-[59px]" />
            <col />
            <col className="w-[131px]" />
            <col className="w-[131px]" />
            <col className="w-[131px]" />
            <col className="w-[179px]" />
          </colgroup>
          <tbody>
            <tr className="h-[25px]">
              <td className={td}>2021-01-04</td>
              <td className={td}>12:51:34</td>
              <td className={td}>+/-</td>
              <td className={td}>MEC Pressure monitoring rod side - Low limit exceeded</td>
              <td className={td}>DC2</td>
              <td className={td}>RG_MEC</td>
              <td className={td}>10027021</td>
              <td className={td}>R02RG001_BDFD001</td>
            </tr>
          </tbody>
        </table>
      </div>
    </div>
  );
}

function FootButton({ children, className = "", label, active }: { children: ReactNode; className?: string; label?: string; active?: boolean }) {
  return (
    <button
      aria-label={label}
      className={`flex h-full shrink-0 items-center justify-center gap-1 border-r border-black text-[#eee] shadow-[inset_1px_1px_0_#777] ${active ? "bg-linear-to-b from-[#333] to-[#626262]" : "bg-linear-to-b from-[#626262] to-[#363636]"} ${className}`}
    >
      {children}
    </button>
  );
}

function Up() {
  return (
    <svg className="h-[5px] w-[5px]" viewBox="0 0 6 5">
      <path d="M0 5 L3 0 L6 5 Z" fill="#fff" />
    </svg>
  );
}

function Footer() {
  return (
    <footer className="flex h-10 border-t border-b border-black bg-linear-to-b from-[#5a5a5a] to-[#333]">
      {["TF", "RM"].map((t) => (
        <FootButton key={t} className="w-[74px] text-[17px]">{t}</FootButton>
      ))}
      <FootButton label="Flag" className="w-[74px]">
        <svg className="h-6 w-5" viewBox="0 0 20 24">
          <path d="M1 1 V24" stroke="#ccc" strokeWidth="1.500" />
          <path d="M3 2 Q7 -1 11 2 T20 1 V12 Q15 15 11 13 T3 13 Z" fill="#ccc" />
        </svg>
      </FootButton>
      {["DC", "CC"].map((t) => (
        <FootButton key={t} className="w-[74px] text-[17px]">{t}</FootButton>
      ))}
      <span className="w-[3px] border-r border-black bg-[#666]" />
      {["Shear", "Stand F1", "Stand F2", "Stand F3", "Stand F4", "Stand F5", "Stand F6"].map((t) => (
        <FootButton key={t} active={t === "Stand F1"} className="w-[128px] text-[16px]">{t}</FootButton>
      ))}
      <FootButton className="w-[128px] text-[16px] leading-[18px]">
        <span>
          Devices
          <br />
          FM Exit
        </span>
      </FootButton>
      <span className="flex-1 border-r border-black" />
      <FootButton label="Screens" className="w-[59px]">
        <svg className="h-6 w-[26px]" viewBox="0 0 26 24">
          <path d="M0 0 H26 V17 H0 Z M3 3 V8 H12 V3 Z M14 3 V8 H23 V3 Z M3 10 V14 H12 V10 Z M14 10 V14 H23 V10 Z" fill="#fff" fillRule="evenodd" />
          <path d="M10 17 H16 V21 H20 V24 H6 V21 H10 Z" fill="#fff" />
        </svg>
        <Up />
      </FootButton>
      <FootButton label="Login" className="w-[59px]">
        <svg className="h-[26px] w-[26px]" viewBox="0 0 26 26">
          <path d="M0 1 H26 V17 H0 Z" fill="#fff" />
          <path d="M2 3 H24 V15 H2 Z" fill="#c0c0c0" />
          <path d="M10 17 H16 V21 H18 V23 H6 V21 H10 Z" fill="#fff" />
          <circle cx="22" cy="14" r="3" fill="none" stroke="#222" strokeWidth="3.500" />
          <circle cx="22" cy="14" r="3" fill="none" stroke="#fff" strokeWidth="1.800" />
          <path d="M22 17 V26 M22 23 H25" stroke="#fff" strokeWidth="1.800" />
        </svg>
        <Up />
      </FootButton>
      <FootButton label="Screenshot" className="w-[59px]">
        <svg className="h-5 w-6" viewBox="0 0 24 20">
          <path d="M2 1 H7 V3 H9 L10 0 H18 L19 3 H24 V20 H0 V3 H2 Z" fill="#fff" />
          <circle cx="14" cy="11.500" r="4.200" fill="none" stroke="#444" strokeWidth="2.800" />
          <rect x="2" y="5" width="4" height="2" fill="#444" />
        </svg>
      </FootButton>
      <FootButton label="Acknowledge" className="w-[58px]">
        <svg className="h-[26px] w-6" viewBox="0 0 24 26" fill="none" stroke="#fff">
          <path d="M15 5.500 H1.500 V23.500 H19 V13" strokeWidth="3" />
          <path d="M6 12 L10.500 17 L21 2" strokeWidth="4" />
        </svg>
      </FootButton>
    </footer>
  );
}

/* ---------- timer window ---------- */

function Tick({ id, checked, label, gap }: { id: string; checked?: boolean; label: string; gap?: boolean }) {
  return (
    <span className={`flex items-center ${gap ? "gap-[6px]" : "gap-[2px]"}`}>
      <span className="grid">
        <input
          id={id}
          type="checkbox"
          defaultChecked={checked}
          className="peer h-[13px] w-[13px] appearance-none border border-[#222] bg-white [grid-area:1/1]"
        />
        <svg className="pointer-events-none invisible h-[13px] w-[13px] [grid-area:1/1] peer-checked:visible" viewBox="0 0 13 13" fill="none">
          <path d="M2.500 6.500 L5.200 9.300 L10.500 3" stroke="#222" strokeWidth="1.300" />
        </svg>
      </span>
      <label htmlFor={id} className="whitespace-nowrap">{label}</label>
    </span>
  );
}

function TimerWindow() {
  const btn = "flex items-center justify-center border border-[#adadad] bg-[#e1e1e1]";
  const inp = "min-w-0 border border-[#7a7a7a] bg-white px-px";
  return (
    <div className="absolute top-[67px] right-[140px] z-30 flex h-[356px] w-[388px] flex-col border border-[#888] bg-[#f0f0f0] text-[11px] text-[#111] shadow-[0_4px_12px_rgba(0,0,0,0.35)]">
      <div className="flex h-[30px] shrink-0 items-center bg-white pl-[10px] text-[#999]">
        <svg className="h-3 w-3" viewBox="0 0 12 12">
          <circle cx="6" cy="6.500" r="5" fill="#58a7a0" stroke="#b9d8cf" />
          <circle cx="7" cy="5" r="2.500" fill="#c87a62" />
        </svg>
        <span className="ml-[7px] font-['Noto_Sans'] text-[12px]">WinCC Timer</span>
        <span className="ml-auto flex items-center gap-9 pr-[17px]">
          <button aria-label="Minimize" className="h-px w-[10px] bg-[#999]" />
          <button aria-label="Maximize" className="h-[10px] w-[10px] border border-[#999]" />
          <button aria-label="Close">
            <svg className="h-[11px] w-[11px]" viewBox="0 0 11 11">
              <path d="M0 0 L11 11 M11 0 L0 11" stroke="#999" />
            </svg>
          </button>
        </span>
      </div>
      <div className="flex flex-1 flex-col px-3 pt-3">
        <div className="flex gap-[7px] pl-px">
          <div className="flex w-[180px] flex-col gap-[7px]">
            <div className="flex gap-[7px]">
              <button className="h-[21px] w-[53px] border border-[#0078d7] bg-[#e5f1fb]">Time!</button>
              <input aria-label="SQL file" className={`${inp} h-5 flex-1`} defaultValue="SDI_CSPM_1-1033.sql" />
            </div>
            <input aria-label="Folder" className={`${inp} h-5`} defaultValue="C:\Temp\timer\Measurements" />
          </div>
          <div className="flex w-[73px] flex-col gap-[5px] pt-px">
            <button className={`${btn} h-[21px]`}>Recalculate</button>
            <button className={`${btn} h-[21px]`}>StdDev</button>
          </div>
          <div className="flex w-[94px] flex-col gap-[6px]">
            <input aria-label="Database" className={`${inp} h-5`} defaultValue="pdlrt_cspm_3" />
            <div className="flex items-center gap-[7px]">
              <button className={`${btn} h-[21px] w-[39px]`}>Expo</button>
              <button role="switch" aria-checked="false" aria-label="Mode" className="flex h-3 w-10 items-center rounded-full bg-white">
                <span className="h-6 w-6 rounded-full bg-[#808080]" />
              </button>
            </div>
          </div>
        </div>
        <ul className="mt-[9px] h-[191px] w-[362px] border border-[#828790] bg-white pt-[2px] pl-[9px]">
          {menus.map((m) => (
            <li key={m} className="flex h-4 items-center">
              <svg className="h-4 w-[14px] shrink-0" viewBox="0 0 14 16" fill="none">
                <path d="M4.500 0 V16 M9 8.500 H14" stroke="#999" strokeDasharray="1 1" />
                <rect x="0.500" y="4.500" width="8" height="8" fill="#fff" stroke="#919191" />
                <path d="M2 8.500 H7 M4.500 6 V11" stroke="#3a55a0" />
              </svg>
              <Tick id={`tree-${m}`} checked label={m} />
            </li>
          ))}
        </ul>
        <div className="mt-[6px] flex gap-1">
          <textarea aria-label="Output" className="-ml-px h-[43px] w-[301px] resize-none border border-[#828790] bg-white" />
          <div className="flex flex-col gap-[13px] pt-[2px] leading-[13px]">
            <Tick id="expand" label="Expand" gap />
            <Tick id="select" checked label="Select" gap />
          </div>
        </div>
      </div>
    </div>
  );
}

export default function App() {
  return (
    <div className="relative flex min-h-screen flex-col bg-[#e4e4e4] font-['Liberation_Sans',sans-serif] text-black">
      <TopMenu />
      <Header />
      <CrumbBar />
      <ProcessArea />
      <TrendArea />
      <AlarmLine />
      <Footer />
      <TimerWindow />
    </div>
  );
}
